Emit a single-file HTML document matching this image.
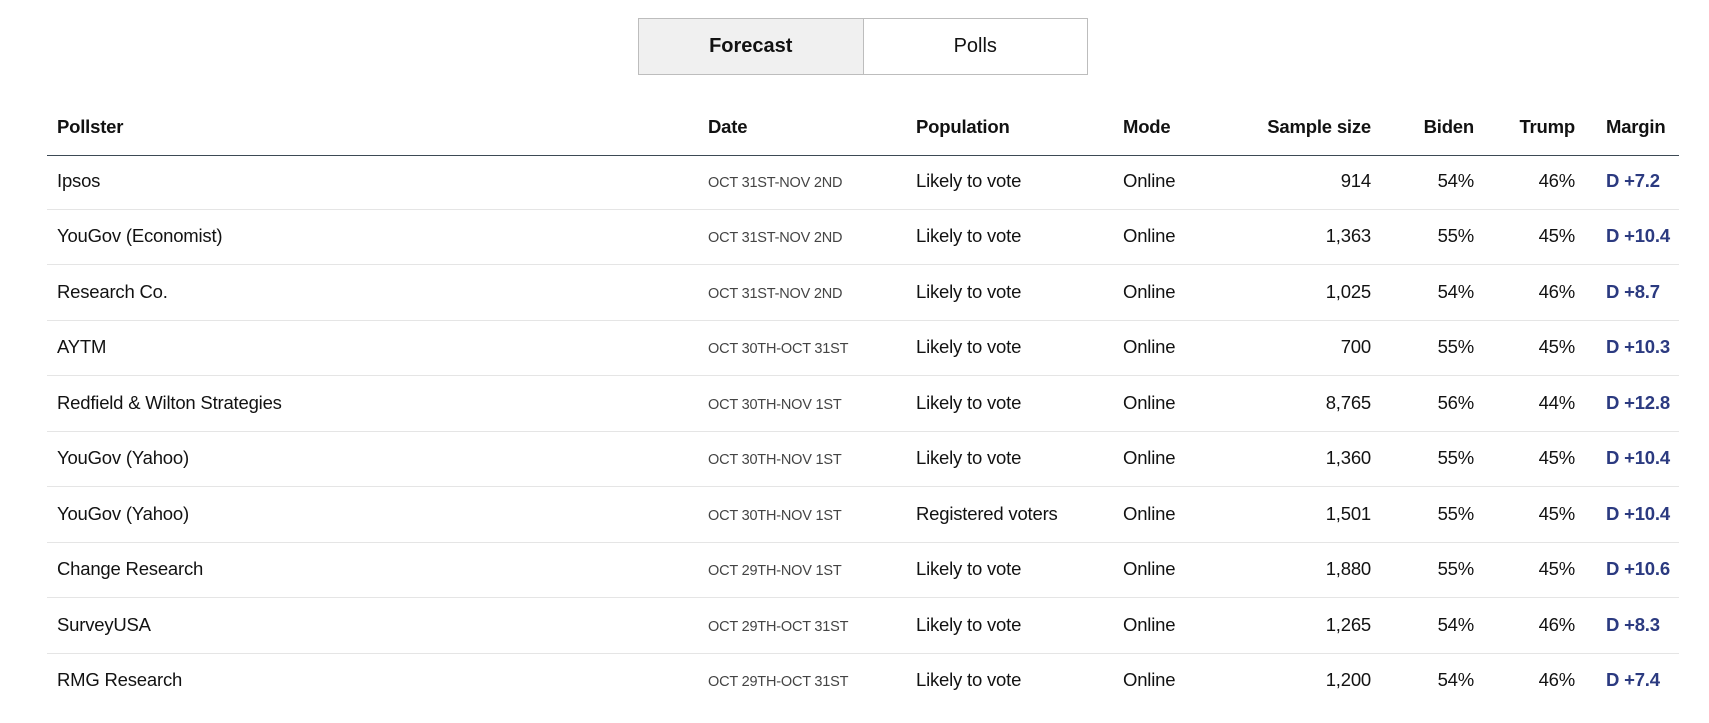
<!DOCTYPE html>
<html><head><meta charset="utf-8"><style>
body{margin:0;width:1709px;height:723px;background:#fff;font-family:"Liberation Sans",sans-serif;color:#121212;position:relative;overflow:hidden}
.tabs{position:absolute;left:638px;top:18px;width:448px;height:55px;border:1px solid #bdbdbd;display:flex}
.tabs div{flex:1;display:flex;align-items:center;justify-content:center;font-size:20px}
.tabs .a{background:#f0f0f0;font-weight:bold;border-right:1px solid #bdbdbd}
.r{position:absolute;left:47px;width:1632px;height:55.5px}
.r span{position:absolute;top:50%;transform:translateY(-50%);font-size:18.5px;white-space:nowrap;letter-spacing:-0.2px}
.h span{font-weight:bold}
.c1{left:10px}.c2{left:661px}.c3{left:869px}.c4{left:1076px}
.c5{right:308px}.c6{right:205px}.c7{right:104px}.c8{left:1559px}
.d{font-size:14.5px!important;color:#444;margin-top:2px}
.m{color:#2b3a80;font-weight:bold}
.sep{border-bottom:1px solid #e5e5e5}
</style></head><body>
<div class="tabs"><div class="a">Forecast</div><div>Polls</div></div>
<div class="r h" style="top:99px;border-bottom:1px solid #3d4a55"><span class="c1">Pollster</span><span class="c2">Date</span><span class="c3">Population</span><span class="c4">Mode</span><span class="c5">Sample size</span><span class="c6">Biden</span><span class="c7">Trump</span><span class="c8">Margin</span></div>
<div class="r sep" style="top:153px"><span class="c1">Ipsos</span><span class="c2 d">OCT 31ST-NOV 2ND</span><span class="c3">Likely to vote</span><span class="c4">Online</span><span class="c5">914</span><span class="c6">54%</span><span class="c7">46%</span><span class="c8 m">D +7.2</span></div>
<div class="r sep" style="top:208.5px"><span class="c1">YouGov (Economist)</span><span class="c2 d">OCT 31ST-NOV 2ND</span><span class="c3">Likely to vote</span><span class="c4">Online</span><span class="c5">1,363</span><span class="c6">55%</span><span class="c7">45%</span><span class="c8 m">D +10.4</span></div>
<div class="r sep" style="top:264px"><span class="c1">Research Co.</span><span class="c2 d">OCT 31ST-NOV 2ND</span><span class="c3">Likely to vote</span><span class="c4">Online</span><span class="c5">1,025</span><span class="c6">54%</span><span class="c7">46%</span><span class="c8 m">D +8.7</span></div>
<div class="r sep" style="top:319.5px"><span class="c1">AYTM</span><span class="c2 d">OCT 30TH-OCT 31ST</span><span class="c3">Likely to vote</span><span class="c4">Online</span><span class="c5">700</span><span class="c6">55%</span><span class="c7">45%</span><span class="c8 m">D +10.3</span></div>
<div class="r sep" style="top:375px"><span class="c1">Redfield &amp; Wilton Strategies</span><span class="c2 d">OCT 30TH-NOV 1ST</span><span class="c3">Likely to vote</span><span class="c4">Online</span><span class="c5">8,765</span><span class="c6">56%</span><span class="c7">44%</span><span class="c8 m">D +12.8</span></div>
<div class="r sep" style="top:430.5px"><span class="c1">YouGov (Yahoo)</span><span class="c2 d">OCT 30TH-NOV 1ST</span><span class="c3">Likely to vote</span><span class="c4">Online</span><span class="c5">1,360</span><span class="c6">55%</span><span class="c7">45%</span><span class="c8 m">D +10.4</span></div>
<div class="r sep" style="top:486px"><span class="c1">YouGov (Yahoo)</span><span class="c2 d">OCT 30TH-NOV 1ST</span><span class="c3">Registered voters</span><span class="c4">Online</span><span class="c5">1,501</span><span class="c6">55%</span><span class="c7">45%</span><span class="c8 m">D +10.4</span></div>
<div class="r sep" style="top:541.5px"><span class="c1">Change Research</span><span class="c2 d">OCT 29TH-NOV 1ST</span><span class="c3">Likely to vote</span><span class="c4">Online</span><span class="c5">1,880</span><span class="c6">55%</span><span class="c7">45%</span><span class="c8 m">D +10.6</span></div>
<div class="r sep" style="top:597px"><span class="c1">SurveyUSA</span><span class="c2 d">OCT 29TH-OCT 31ST</span><span class="c3">Likely to vote</span><span class="c4">Online</span><span class="c5">1,265</span><span class="c6">54%</span><span class="c7">46%</span><span class="c8 m">D +8.3</span></div>
<div class="r" style="top:652.5px"><span class="c1">RMG Research</span><span class="c2 d">OCT 29TH-OCT 31ST</span><span class="c3">Likely to vote</span><span class="c4">Online</span><span class="c5">1,200</span><span class="c6">54%</span><span class="c7">46%</span><span class="c8 m">D +7.4</span></div>
</body></html>
